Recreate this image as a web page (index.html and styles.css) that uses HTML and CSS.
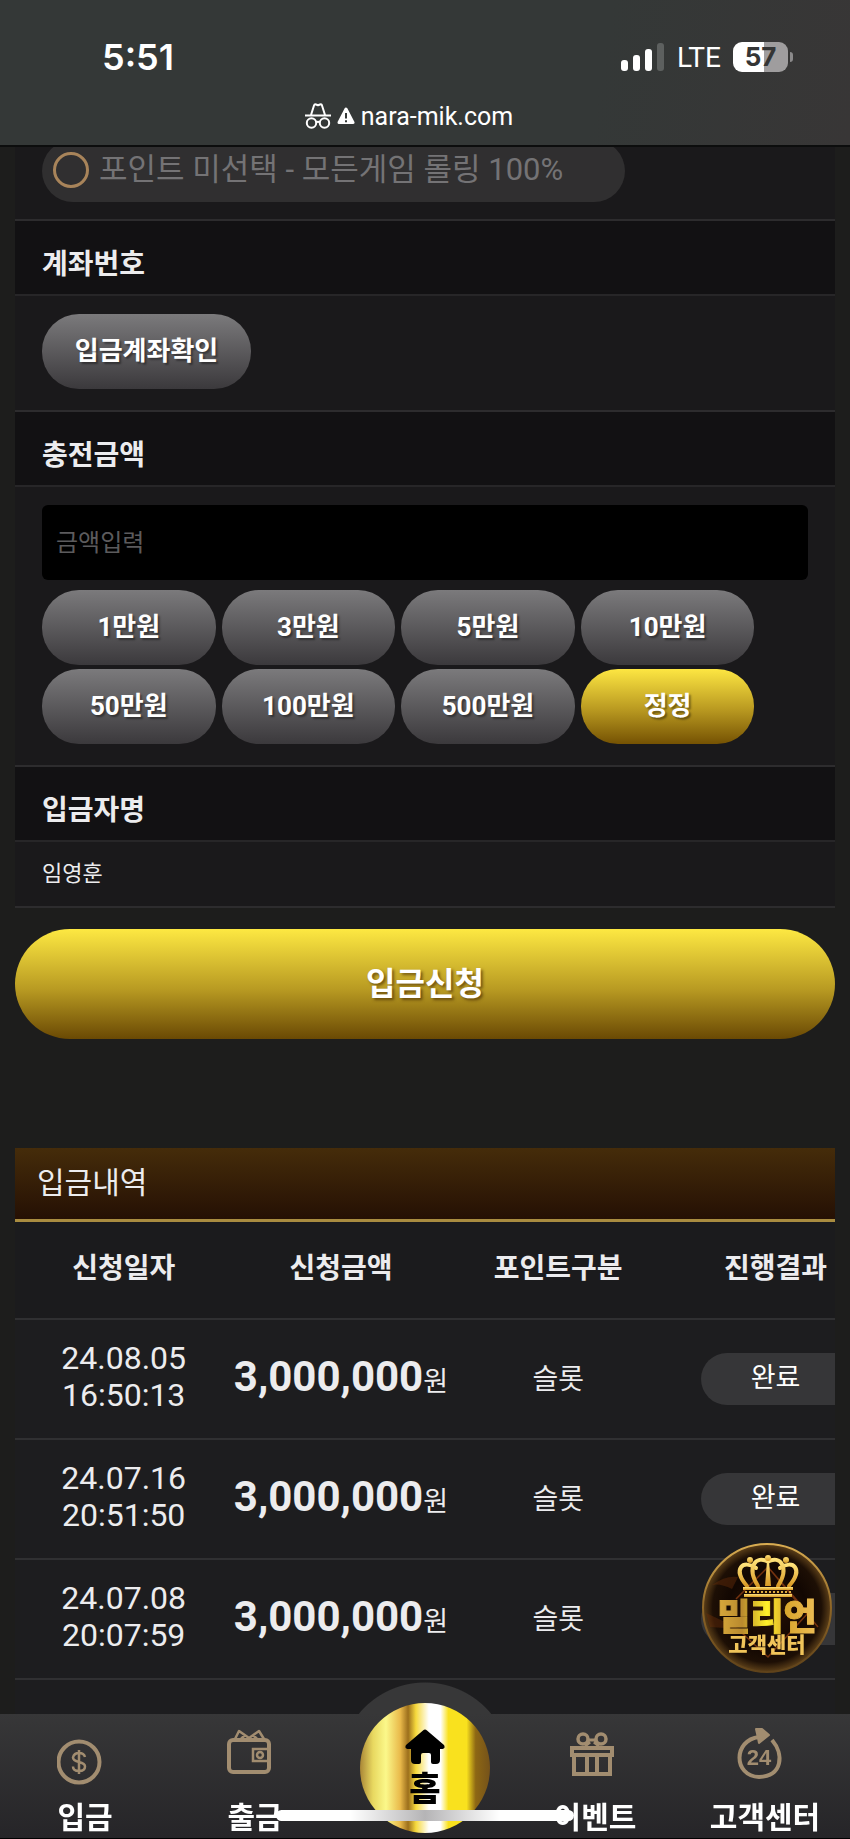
FILE: index.html
```html
<!DOCTYPE html>
<html lang="ko">
<head>
    <meta charset="UTF-8">
    <meta name="viewport" content="width=device-width, initial-scale=1.0">
    <title>입금신청</title>
    <link rel="stylesheet" href="styles.css">
</head>
<body>
    <header class="browser-bar">
        <div class="status">
            <span class="time">5:51</span>
            <div class="status-right">
                <svg class="signal" viewBox="0 0 44 28" width="44" height="28">
                    <rect x="0" y="17" width="7" height="11" rx="3" fill="#fff"/>
                    <rect x="12" y="12" width="7" height="16" rx="3" fill="#fff"/>
                    <rect x="24" y="6" width="7" height="22" rx="3" fill="#fff"/>
                    <rect x="36" y="0" width="7" height="28" rx="3" fill="#5d605f"/>
                </svg>
                <span class="network">LTE</span>
                <div class="battery"><span>57</span></div>
            </div>
        </div>
        <div class="address">
            <svg viewBox="0 0 26 26" width="26" height="26" fill="none" stroke="#fff" stroke-width="2">
                <path d="M0 12.500h26M6 12l3-9.500q.5-1.500 2-1l2 .8 2-.8q1.500-.5 2 1L20 12" stroke-linejoin="round"/>
                <circle cx="6.500" cy="20" r="4.700"/>
                <circle cx="19.500" cy="20" r="4.700"/>
                <path d="M11 19.500q2-1.500 4 0"/>
            </svg>
            <svg viewBox="0 0 18 18" width="18" height="18">
                <path d="M9 2L16 15.500H2z" fill="#fff" stroke="#fff" stroke-width="3" stroke-linejoin="round"/>
                <path d="M9 6v5.500M9 13.200v2" stroke="#343837" stroke-width="2"/>
            </svg>
            <span>nara-mik.com</span>
        </div>
    </header>

    <main>
        <form class="deposit">
            <div class="cell cell-first">
                <label class="point"><input type="radio" name="point">포인트 미선택 - 모든게임 롤링 100%</label>
            </div>
            <h2>계좌번호</h2>
            <div class="cell">
                <button type="button" class="btn btn-account">입금계좌확인</button>
            </div>
            <h2><label for="amount">충전금액</label></h2>
            <div class="cell">
                <input type="text" id="amount" class="amount-input" placeholder="금액입력">
                <div class="amounts">
                    <button type="button" class="btn">1만원</button>
                    <button type="button" class="btn">3만원</button>
                    <button type="button" class="btn">5만원</button>
                    <button type="button" class="btn">10만원</button>
                    <button type="button" class="btn">50만원</button>
                    <button type="button" class="btn">100만원</button>
                    <button type="button" class="btn">500만원</button>
                    <button type="button" class="btn btn-gold">정정</button>
                </div>
            </div>
            <h2>입금자명</h2>
            <div class="cell name">임영훈</div>
            <button type="submit" class="submit">입금신청</button>
        </form>

        <section class="history">
            <h3>입금내역</h3>
            <table>
                <thead>
                    <tr><th>신청일자</th><th>신청금액</th><th>포인트구분</th><th>진행결과</th></tr>
                </thead>
                <tbody>
                    <tr>
                        <td class="date">24.08.05<br>16:50:13</td>
                        <td><strong>3,000,000</strong><small>원</small></td>
                        <td>슬롯</td>
                        <td><span class="state">완료</span></td>
                    </tr>
                    <tr>
                        <td class="date">24.07.16<br>20:51:50</td>
                        <td><strong>3,000,000</strong><small>원</small></td>
                        <td>슬롯</td>
                        <td><span class="state">완료</span></td>
                    </tr>
                    <tr>
                        <td class="date">24.07.08<br>20:07:59</td>
                        <td><strong>3,000,000</strong><small>원</small></td>
                        <td>슬롯</td>
                        <td><span class="state"></span></td>
                    </tr>
                </tbody>
            </table>
        </section>
    </main>

    <a href="#" class="support">
        <svg viewBox="0 0 130 130" width="130" height="130">
            <defs>
                <radialGradient id="disc">
                    <stop offset="0" stop-color="#2a1206"/>
                    <stop offset=".6" stop-color="#120702"/>
                    <stop offset=".85" stop-color="#1d0f05"/>
                    <stop offset="1" stop-color="#5d4019"/>
                </radialGradient>
                <linearGradient id="rim" x1="0" y1="0" x2="0" y2="1">
                    <stop offset="0" stop-color="#d9ad52"/>
                    <stop offset=".5" stop-color="#8d6526"/>
                    <stop offset="1" stop-color="#5f421a"/>
                </linearGradient>
                <linearGradient id="gold" x1="0" y1="0" x2="1" y2="0">
                    <stop offset="0" stop-color="#d9aa3c"/>
                    <stop offset=".25" stop-color="#b98a2e"/>
                    <stop offset=".5" stop-color="#fff029"/>
                    <stop offset=".7" stop-color="#d9a62e"/>
                    <stop offset="1" stop-color="#edbd55"/>
                </linearGradient>
                <linearGradient id="crown" x1="0" y1="0" x2="0" y2="1">
                    <stop offset="0" stop-color="#ffe27a"/>
                    <stop offset="1" stop-color="#d99a25"/>
                </linearGradient>
            </defs>
            <circle cx="65" cy="65" r="64" fill="url(#disc)" stroke="url(#rim)" stroke-width="2"/>
            <path d="M10 42Q24 32 36 34L30 46Q18 40 10 42zM4 70l34 16-30-2z" fill="#6d2f0a" opacity=".4"/>
            <path d="M34 56L66 24l40 46M66 24l50 60M40 90l26 24 40-44" fill="none" stroke="#74320f" stroke-width="1.500"/>
            <!-- crown -->
            <g fill="none" stroke="url(#crown)" stroke-width="4" stroke-linecap="round">
                <path d="M45 43C30 26 41 16 54 25M87 43C102 26 91 16 78 25"/>
                <path d="M56 43C44 24 54 12 66 18.500C78 12 88 24 76 43"/>
            </g>
            <g fill="url(#crown)">
                <circle cx="66" cy="15" r="3"/>
                <circle cx="48" cy="17" r="3"/>
                <circle cx="84" cy="17" r="3"/>
                <path d="M63 43L65 18h2l2 25z"/>
                <rect x="41" y="44" width="50" height="3"/>
                <rect x="42" y="51" width="48" height="3"/>
            </g>
            <path d="M43 49h46" stroke="#e0ad3f" stroke-width="2" stroke-dasharray="2 2"/>
            <text class="support-name" x="65" y="87" fill="url(#gold)" stroke="url(#gold)">밀리언</text>
            <text class="support-label" x="65" y="109" fill="#f0c45a">고객센터</text>
        </svg>
    </a>

    <nav class="bottom-nav">
        <a href="#">
            <svg viewBox="0 0 56 60" width="56" height="60" fill="none" stroke="#a28d70" stroke-width="4">
                <circle cx="22" cy="34" r="20.500"/>
                <path d="M28 29q-1-4-6-4t-6 4.500q0 3 6 4.500t6 4.500q0 4.500-6 4.500t-6-4.500M22 22v24" stroke-width="2.500"/>
            </svg>
            <span>입금</span>
        </a>
        <a href="#">
            <svg viewBox="0 0 56 60" width="56" height="60" fill="none" stroke="#a28d70" stroke-width="4">
                <rect x="2" y="12" width="40" height="32" rx="4"/>
                <path d="M8 11l4-8 10 7 10-7 5 8M14 11l4-4M30 11l-4-4" stroke-width="2.500" stroke-linejoin="round"/>
                <rect x="26" y="21" width="16" height="12" stroke-width="2.500"/>
                <circle cx="33" cy="27" r="3" stroke-width="2.500"/>
            </svg>
            <span>출금</span>
        </a>
        <a href="#" class="home">
            <span class="home-disc">
                <svg viewBox="0 0 40 36" width="40" height="36">
                    <path d="M18 1.500q2-2 4 0L39 16q2 4-3 4h-1v11q0 4-4 4h-3q-2 0-2-2v-7q0-2-2-2h-6q-2 0-2 2v7q0 2-2 2h-4q-4 0-4-4V20H4q-5 0-3-4z" fill="#000"/>
                </svg>
                <span>홈</span>
            </span>
        </a>
        <a href="#">
            <svg viewBox="0 0 56 60" width="56" height="60" fill="none" stroke="#a28d70" stroke-width="4">
                <rect x="5" y="20" width="40" height="7"/>
                <path d="M7 27v19h36V27M20 27v19M30 27v19"/>
                <circle cx="16" cy="11" r="5" stroke-width="3.500"/>
                <circle cx="34" cy="11" r="5" stroke-width="3.500"/>
                <path d="M21 12h8M23 14l-5 4M27 14l5 4" stroke-width="3"/>
            </svg>
            <span>이벤트</span>
        </a>
        <a href="#">
            <svg viewBox="0 0 56 60" width="56" height="60" fill="none" stroke="#a28d70" stroke-width="4">
                <path d="M22 9C-4 12-4 48 22 49C46 48 47 26 35 12"/>
                <path d="M19 1h6l7 6-10 8-1-5z" fill="#a28d70" stroke-width="2" stroke-linejoin="round"/>
                <text class="hours" x="22" y="37">24</text>
            </svg>
            <span>고객센터</span>
        </a>
    </nav>
    <div class="home-indicator"></div>
</body>
</html>
```
FILE: styles.css
```css
* {
    box-sizing: border-box;
}
body {
    margin: 0;
    min-height: 100vh;
    background: #1d1d1c;
    color: #ececee;
    font-family: Roboto, 'Noto Sans CJK KR', sans-serif;
    overflow-x: hidden;
}
h2, h3 {
    margin: 0;
}
a {
    color: inherit;
    text-decoration: none;
}
button {
    border: none;
    color: #fff;
    font-family: inherit;
    font-weight: bold;
    cursor: pointer;
}

/* browser bar */
.browser-bar {
    position: fixed;
    top: 0;
    left: 0;
    right: 0;
    z-index: 10;
    padding-top: 36px;
    height: 147px;
    background: linear-gradient(100deg, #343837 70%, #383636);
    border-bottom: 2px solid #0c0d0d;
    color: #fff;
}
.status {
    display: flex;
    justify-content: space-between;
    align-items: center;
    height: 42px;
    padding: 0 62px 0 102px;
    font-family: Inter, sans-serif;
}
.time {
    font-size: 36px;
    font-weight: 600;
}
.status-right {
    display: flex;
    align-items: center;
    gap: 12px;
}
.network {
    font-family: Roboto, sans-serif;
    font-size: 28px;
}
.battery {
    position: relative;
    width: 55px;
    height: 30px;
    border-radius: 9px;
    background: linear-gradient(90deg, #fff 57%, #9f9d9e 57%);
    color: #343535;
    font-size: 26px;
    font-weight: 700;
    line-height: 30px;
    text-align: center;
}
.battery::after {
    content: '';
    position: absolute;
    left: 57px;
    top: 10px;
    width: 3px;
    height: 10px;
    border-radius: 0 3px 3px 0;
    background: #8b8a8b;
}
.address {
    display: flex;
    justify-content: center;
    align-items: center;
    gap: 6px;
    height: 40px;
    margin-top: 18px;
    padding-right: 32px;
    font-size: 25px;
}

/* deposit form */
main {
    padding: 122px 15px 0;
}
.cell {
    padding: 18px 27px 21px;
    background: #1a191b;
    border-bottom: 2px solid #2d2c2e;
}
.cell-first {
    padding-bottom: 17px;
}
.point {
    display: flex;
    align-items: center;
    gap: 10px;
    width: 583px;
    max-width: 100%;
    height: 62px;
    padding: 0 0 2px 11px;
    border-radius: 31px;
    background: #302f30;
    color: #747375;
    font-size: 31px;
    line-height: 56px;
}
.point input {
    appearance: none;
    width: 36px;
    height: 36px;
    margin: 0;
    border: 3px solid #a8845a;
    border-radius: 50%;
}
.deposit h2 {
    height: 75px;
    padding: 8px 27px 0;
    background: #121113;
    border-bottom: 2px solid #272628;
    font-size: 28px;
    line-height: 72px;
}
.btn {
    height: 75px;
    padding: 0 0 6px;
    border-radius: 37px;
    background: linear-gradient(#7b7a7c, #3b393c);
    font-size: 26px;
    text-shadow: 2px 2px 2px rgba(0, 0, 0, 0.4);
}
.btn-account {
    display: block;
    width: 209px;
}
.btn-gold {
    background: linear-gradient(#fde642, #b89820 55%, #755203);
}
.amount-input {
    display: block;
    width: 100%;
    height: 75px;
    padding: 0 14px;
    border: none;
    border-radius: 6px;
    background: #000;
    color: #fff;
    font-family: inherit;
    font-size: 24px;
}
.amount-input::placeholder {
    color: #5c5b5d;
}
.amounts {
    display: grid;
    grid-template-columns: repeat(4, 1fr);
    gap: 4px 6px;
    width: 93%;
    margin-top: 10px;
}
.name {
    padding: 14px 27px 15px;
    font-size: 22px;
    line-height: 35px;
}
.submit {
    width: 100%;
    height: 110px;
    margin-top: 21px;
    padding-bottom: 8px;
    border-radius: 55px;
    background: linear-gradient(#fde842, #b89a22 55%, #6a4904);
    font-size: 32px;
    text-shadow: 2px 2px 3px rgba(60, 30, 0, 0.6);
}

/* deposit history */
.history {
    margin-top: 109px;
    padding-bottom: 150px;
    background: #1d1d1f;
    overflow: hidden;
}
.history h3 {
    height: 74px;
    padding-left: 22px;
    background: linear-gradient(#452c0a, #251004);
    border-bottom: 3px solid #a98c40;
    font-size: 30px;
    font-weight: normal;
    line-height: 70px;
}
/* wider than its box, the last column is cut off */
.history table {
    width: 106%;
    table-layout: fixed;
    border-collapse: collapse;
    text-align: center;
    font-size: 28px;
}
.history th, .history td {
    padding: 0 0 4px;
    border-bottom: 2px solid #303032;
}
.history th {
    height: 97px;
    padding-bottom: 8px;
    background: #1b1b1d;
}
.history td {
    height: 120px;
    white-space: nowrap;
}
.history .date {
    font-size: 32px;
    line-height: 37px;
}
.history strong {
    font-size: 42px;
    line-height: 42px;
}
.history small {
    font-size: 27px;
}
.state {
    display: block;
    width: 150px;
    height: 52px;
    margin: 4px auto 0;
    border-radius: 26px 0 0 26px;
    background: #363638;
    color: #fff;
    font-size: 27px;
    line-height: 50px;
}

/* floating support link */
.support {
    position: fixed;
    right: 18px;
    bottom: 166px;
    z-index: 5;
    height: 130px;
}
.support text {
    text-anchor: middle;
    font-weight: 900;
}
.support-name {
    font-size: 36px;
}
.support-label {
    font-size: 21px;
}

/* bottom navigation */
.bottom-nav {
    position: fixed;
    left: 0;
    right: 0;
    bottom: 0;
    z-index: 6;
    display: grid;
    grid-template-columns: repeat(5, 1fr);
    height: 125px;
    background: linear-gradient(#373738, #262528);
    border-bottom: 1px solid #000;
    color: #fff;
    font-size: 30px;
    font-weight: bold;
}
.bottom-nav a {
    display: flex;
    flex-direction: column;
    align-items: center;
    padding-top: 14px;
    line-height: 60px;
}
.bottom-nav .hours {
    fill: #a28d70;
    stroke: none;
    font-family: 'Liberation Sans', sans-serif;
    font-size: 22px;
    text-anchor: middle;
}
.bottom-nav .home {
    position: relative;
    padding: 0;
}
.home::before {
    content: '';
    position: absolute;
    left: 50%;
    top: -32px;
    width: 172px;
    height: 32px;
    margin-left: -86px;
    background: radial-gradient(circle 86px at 86px 86px, #373738 85px, transparent 86px);
}
.home-disc {
    position: relative;
    display: flex;
    flex-direction: column;
    align-items: center;
    width: 130px;
    height: 130px;
    margin-top: -11px;
    padding-top: 26px;
    border-radius: 50%;
    background: linear-gradient(90deg, #a98636, #e8d860 10%, #fbf88a 20%, #e9b94a 31%, #9c6f1c 37%, #f6d93c 43%, #fff 53%, #fff 62%, #f9e11e 68%, #f9e11e 82%, #8d6714 89%, #75521a);
    color: #000;
    font-size: 34px;
    font-weight: 900;
    flex-shrink: 0;
}
.home-disc span {
    line-height: 48px;
}
.home-indicator {
    position: fixed;
    left: 50%;
    bottom: 18px;
    z-index: 8;
    width: 298px;
    height: 11px;
    border-radius: 6px;
    background: linear-gradient(90deg, #fff 25%, #b5b4b6 50%, #fff 75%);
    transform: translateX(-50%);
}
```
